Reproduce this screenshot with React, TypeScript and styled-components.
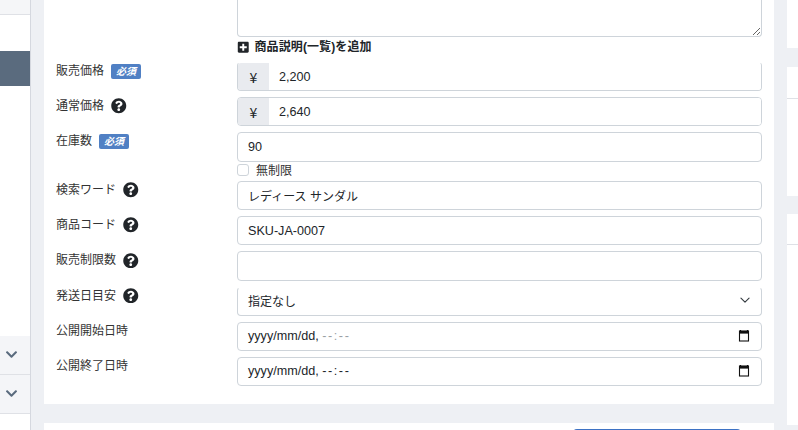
import { ReactNode } from "react";
import styled, { createGlobalStyle } from "styled-components";
import { FaChevronDown, FaPlusSquare, FaQuestionCircle } from "react-icons/fa";

const FONT = `"Liberation Sans", "Noto Sans CJK JP", sans-serif`;

const GlobalStyle = createGlobalStyle`
  html, body {
    margin: 0;
    padding: 0;
    height: 430px;
    overflow: hidden;
    background: #eef0f4;
    font-family: ${FONT};
    color: #212529;
  }
  * { box-sizing: border-box; }
`;

const Help = () => (
  <HelpIcon>
    <FaQuestionCircle />
  </HelpIcon>
);

const CalendarIcon = () => (
  <svg width="12" height="12" viewBox="0 0 12 12" aria-hidden="true">
    <path d="M2.5 0v1.4M9.5 0v1.4" stroke="#111" strokeWidth="1.2" />
    <rect x="1.5" y="1" width="9" height="10" fill="none" stroke="#111" strokeWidth="1.1" />
    <rect x="1" y="1" width="10" height="2.6" fill="#111" />
  </svg>
);

const SelectChevron = () => (
  <svg width="10" height="10" viewBox="0 0 16 16" aria-hidden="true">
    <path d="M1.5 5l6.5 6.5L14.5 5" fill="none" stroke="#343a40" strokeWidth="1.8" strokeLinecap="round" strokeLinejoin="round" />
  </svg>
);

interface RowProps {
  label: string;
  extra?: ReactNode;
  children: ReactNode;
}

const Row = ({ label, extra, children }: RowProps) => (
  <FormRow>
    <LabelCell>
      <LabelText>{label}</LabelText>
      {extra}
    </LabelCell>
    <div>{children}</div>
  </FormRow>
);

const App = () => {
  return (
    <>
      <GlobalStyle />
      <Page>
        <Sidebar>
          <SideTop />
          <SideActive />
          <SideToggle>
            <FaChevronDown />
          </SideToggle>
          <SideToggle>
            <FaChevronDown />
          </SideToggle>
          <SideToggle $plain>
            <FaChevronDown />
          </SideToggle>
        </Sidebar>

        <Main>
          <Card>
            <FormGrid>
              <Row label="">
                <Description readOnly value="" />
                <AddLink>
                  <FaPlusSquare />
                  商品説明(一覧)を追加
                </AddLink>
              </Row>
              <Row label="販売価格" extra={<Required>必須</Required>}>
                <InputGroup $flatTop>
                  <Addon>¥</Addon>
                  <GroupInput readOnly value="2,200" />
                </InputGroup>
              </Row>
              <Row label="通常価格" extra={<Help />}>
                <InputGroup>
                  <Addon>¥</Addon>
                  <GroupInput readOnly value="2,640" />
                </InputGroup>
              </Row>
              <Row label="在庫数" extra={<Required>必須</Required>}>
                <TextInput readOnly value="90" />
                <CheckLine>
                  <CheckBox type="checkbox" readOnly />
                  無制限
                </CheckLine>
              </Row>
              <Row label="検索ワード" extra={<Help />}>
                <TextInput $cjk readOnly value="レディース サンダル" />
              </Row>
              <Row label="商品コード" extra={<Help />}>
                <TextInput readOnly value="SKU-JA-0007" />
              </Row>
              <Row label="販売制限数" extra={<Help />}>
                <TextInput readOnly value="" />
              </Row>
              <Row label="発送日目安" extra={<Help />}>
                <FakeField $flatTop>
                  指定なし
                  <SelectChevron />
                </FakeField>
              </Row>
              <Row label="公開開始日時">
                <FakeField>
                  <DateText>
                    yyyy/mm/dd, <TimeText $muted>--:--</TimeText>
                  </DateText>
                  <CalendarIcon />
                </FakeField>
              </Row>
              <Row label="公開終了日時">
                <FakeField>
                  <DateText>
                    yyyy/mm/dd, <TimeText>--:--</TimeText>
                  </DateText>
                  <CalendarIcon />
                </FakeField>
              </Row>
            </FormGrid>
          </Card>
          <FooterCard>
            <SaveButton />
          </FooterCard>
        </Main>

        <RightRail>
          <RailBlock $height={48} />
          <RailNotch $height={19} />
          <RailBlock $height={129} $lineAt={31} />
          <RailNotch $height={18} />
          <RailBlock $height={211} $lineAt={30} />
        </RightRail>
      </Page>
    </>
  );
};

export default App;

const Page = styled.div`
  display: flex;
  width: 798px;
  height: 430px;
  overflow: hidden;
`;

const Sidebar = styled.aside`
  width: 31px;
  height: 430px;
  flex: none;
  display: flex;
  flex-direction: column;
  overflow: hidden;
  background: #fff;
  border-right: 1px solid #d5d8df;
`;

const SideTop = styled.div`
  height: 15px;
  flex: none;
  background: #f5f6f8;
  border-bottom: 1px solid #dfe1e6;
`;

const SideActive = styled.div`
  height: 35px;
  flex: none;
  margin: 36px 0 250px;
  background: #5a6b7e;
`;

const SideToggle = styled.div<{ $plain?: boolean }>`
  height: 39px;
  flex: none;
  display: flex;
  align-items: center;
  justify-content: center;
  padding: ${(p) => (p.$plain ? "3px 7px 0 0" : "0 7px 2px 0")};
  background: ${(p) => (p.$plain ? "#fff" : "#f4f5f8")};
  border-bottom: 1px solid #dfe1e6;
  color: #5a6b7e;
  font-size: 13px;
`;

const Main = styled.main`
  width: 730px;
  flex: none;
  margin-left: 13px;
`;

const Card = styled.section`
  height: 404px;
  background: #fff;
  padding: 0 12px;
`;

const FormGrid = styled.div`
  display: flex;
  flex-direction: column;
  gap: 6px;
`;

const FormRow = styled.div`
  display: grid;
  grid-template-columns: 181px 525px;
`;

const LabelCell = styled.div`
  display: flex;
  align-items: center;
  height: 18px;
  font-size: 12px;
  line-height: 18px;
  color: #333;
`;

const LabelText = styled.span`
  white-space: nowrap;
`;

const Required = styled.span`
  margin-left: 7px;
  width: 30px;
  height: 15px;
  flex: none;
  border-radius: 2px;
  background: #5080c4;
  color: #fff;
  font-size: 10px;
  font-weight: 700;
  font-style: italic;
  line-height: 15px;
  text-align: center;
`;

const HelpIcon = styled.span`
  display: inline-flex;
  margin-left: 7px;
  font-size: 15.5px;
  color: #212529;
`;

const fieldBorder = "1px solid #ced4da";

const Description = styled.textarea`
  display: block;
  width: 100%;
  height: 37px;
  padding: 0;
  border: ${fieldBorder};
  border-top: 0;
  border-radius: 0 0 4px 4px;
  outline: none;
  background: #fff;
`;

const AddLink = styled.div`
  display: flex;
  align-items: center;
  gap: 5px;
  height: 19px;
  padding-top: 1px;
  font-size: 12px;
  font-weight: 700;
  letter-spacing: 0.1px;
  line-height: 18px;
  color: #212529;

  svg {
    font-size: 12.5px;
  }
`;

const InputGroup = styled.div<{ $flatTop?: boolean }>`
  display: flex;
  height: 29.2px;
  border: ${fieldBorder};
  border-top-color: ${(p) => (p.$flatTop ? "transparent" : "#ced4da")};
  border-radius: 4px;
  overflow: hidden;
`;

const Addon = styled.span`
  width: 31px;
  flex: none;
  display: flex;
  align-items: center;
  justify-content: center;
  background: #e9ebef;
  font-family: "Noto Sans CJK JP", sans-serif;
  font-size: 14px;
  color: #212529;
`;

const GroupInput = styled.input`
  flex: 1;
  min-width: 0;
  padding: 0 10px;
  border: 0;
  outline: none;
  font-family: ${FONT};
  font-size: 12.6px;
  color: #212529;
`;

const TextInput = styled.input<{ $cjk?: boolean }>`
  display: block;
  width: 100%;
  height: 29.2px;
  padding: 0 10px;
  border: ${fieldBorder};
  border-radius: 4px;
  outline: none;
  font-family: ${FONT};
  font-size: ${(p) => (p.$cjk ? "12px" : "12.6px")};
  color: #212529;
`;

const CheckLine = styled.label`
  display: flex;
  align-items: center;
  gap: 7px;
  height: 13.4px;
  padding-top: 3px;
  font-size: 12px;
  color: #333;
`;

const CheckBox = styled.input`
  appearance: none;
  width: 12px;
  height: 12px;
  flex: none;
  margin: 0;
  border: ${fieldBorder};
  border-radius: 3px;
  background: #fff;
`;

const FakeField = styled.div<{ $flatTop?: boolean }>`
  display: flex;
  align-items: center;
  justify-content: space-between;
  height: 29.2px;
  padding: ${(p) => (p.$flatTop ? "0 11px 2px 10px" : "0 11px 0 10px")};
  border: ${fieldBorder};
  border-top-color: ${(p) => (p.$flatTop ? "transparent" : "#ced4da")};
  border-radius: 4px;
  font-size: 12px;
  color: #212529;
`;

const DateText = styled.span`
  font-size: 12.6px;
  white-space: pre;
`;

const TimeText = styled.span<{ $muted?: boolean }>`
  letter-spacing: 1.6px;
  color: ${(p) => (p.$muted ? "#9a9fa5" : "#212529")};
`;

const FooterCard = styled.section`
  height: 30px;
  margin-top: 19px;
  padding: 6px 33px 0 529px;
  background: #fff;
`;

const SaveButton = styled.div`
  height: 20px;
  border-radius: 4px 4px 0 0;
  background: #3d72c4;
`;

const RightRail = styled.aside`
  width: 11px;
  flex: none;
  margin-left: 13px;
  display: flex;
  flex-direction: column;
`;

const RailBlock = styled.div<{ $height: number; $lineAt?: number }>`
  height: ${(p) => p.$height}px;
  flex: none;
  background: ${(p) =>
    p.$lineAt
      ? `linear-gradient(#fff ${p.$lineAt}px, #dfe1e6 ${p.$lineAt}px, #dfe1e6 ${p.$lineAt + 1}px, #fff ${p.$lineAt + 1}px)`
      : "#fff"};
`;

const RailNotch = styled.div<{ $height: number }>`
  height: ${(p) => p.$height}px;
  flex: none;
`;
